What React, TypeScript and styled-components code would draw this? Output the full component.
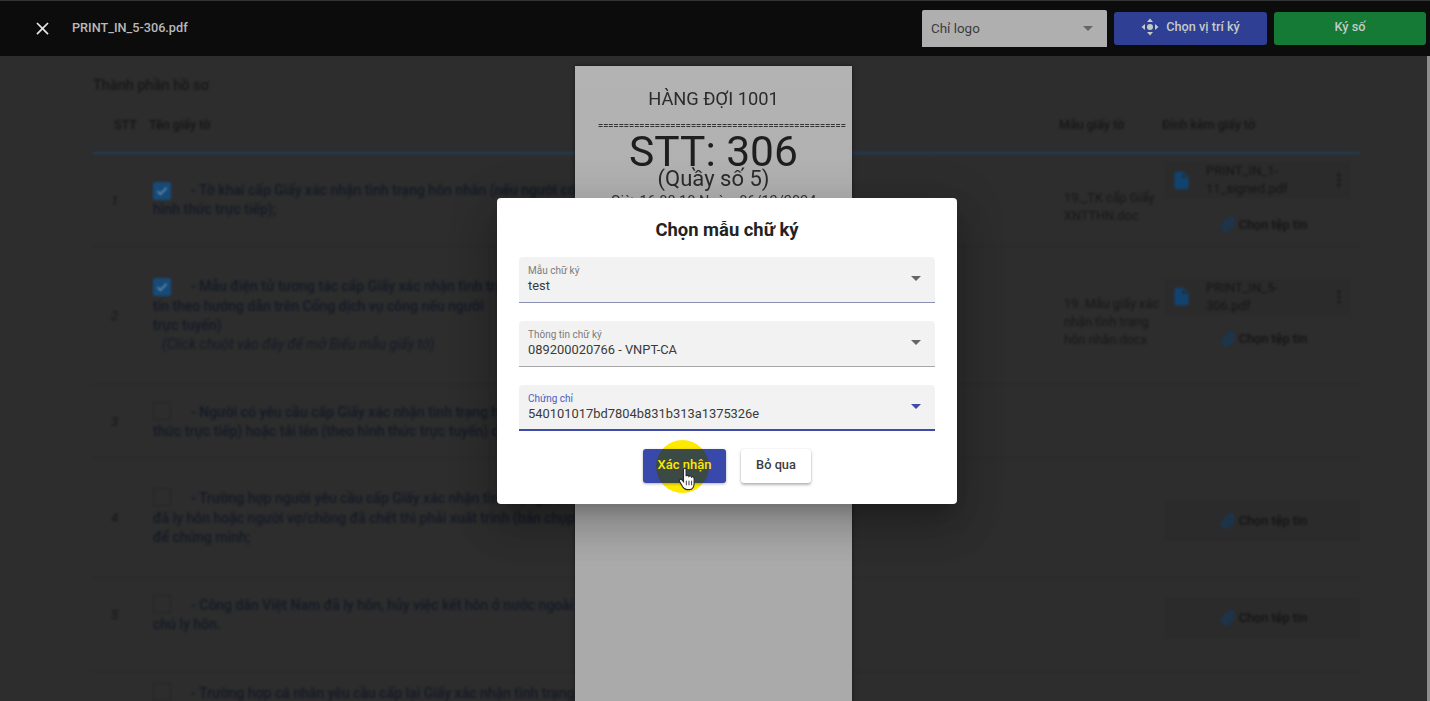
import { FC, ReactNode } from 'react';
import styled, { createGlobalStyle } from 'styled-components';
import { Paperclip } from 'lucide-react';
import { MdClose, MdInsertDriveFile, MdMoreVert } from 'react-icons/md';

const GlobalStyle = createGlobalStyle`
   html, body {
      margin: 0;
      padding: 0;
      height: 100%;
      overflow: hidden;
      font-family: Roboto, "Liberation Sans", sans-serif;
   }
   * { box-sizing: border-box; }
`;

const Screen = styled.div`
   position: relative;
   width: 1430px;
   height: 701px;
   overflow: hidden;
   background: #2d2d2d;
`;

/* page dimmed behind the pdf viewer */
const DocPage = styled.div`
   position: absolute;
   inset: 56px 0 0 0;
   padding: 20px 70px 0 93px;
   filter: blur(0.8px);
   color: #16181d;
   font-size: 14px;
   line-height: 19.3px;
`;

const DocTitle = styled.div`
   font-size: 14.5px;
   font-weight: 500;
   color: #181818;
`;

const grid = `
   display: grid;
   grid-template-columns: 57px 909px 103px 198px;
`;

const HeadRow = styled.div`
   ${grid}
   height: 59px;
   padding-top: 20px;
   border-bottom: 2px solid #1f3d5c;
   font-size: 12.5px;
   font-weight: 500;
   color: #161616;
`;

const HeadStt = styled.div`
   padding-left: 21px;
`;

const HeadName = styled.div`
   margin-left: -1px;
`;

const Row = styled.div<{ $h: number; $pb?: number }>`
   ${grid}
   height: ${(p) => p.$h}px;
   padding-bottom: ${(p) => p.$pb ?? 0}px;
   align-items: center;
   border-bottom: 1px solid #2a2a2a;
`;

const RowNo = styled.div`
   padding-left: 18px;
   font-size: 13px;
   font-style: italic;
   color: #181818;
`;

const NameCell = styled.div`
   padding-left: 3px;
   padding-right: 180px;
   font-weight: 500;
   color: #141a26;
`;

const Hint = styled.div`
   padding-left: 9px;
   font-style: italic;
   font-weight: 400;
`;

const Check = styled.span<{ $on?: boolean }>`
   display: inline-flex;
   align-items: center;
   justify-content: center;
   vertical-align: -3px;
   width: 18px;
   height: 18px;
   margin-right: 20px;
   border-radius: 2px;
   background: ${(p) => (p.$on ? '#174a78' : 'transparent')};
   border: ${(p) => (p.$on ? 'none' : '1.5px solid #262626')};
`;

const FormCell = styled.div`
   margin-top: 13px;
   padding-left: 5px;
   font-size: 12.7px;
   line-height: 18px;
   color: #181818;
   overflow: hidden;
   white-space: nowrap;
`;

const AttachCell = styled.div<{ $gap: number }>`
   display: flex;
   flex-direction: column;
   gap: ${(p) => p.$gap}px;
   margin-top: 6px;
   padding-left: 3px;
`;

const FileCard = styled.div`
   display: flex;
   align-items: center;
   width: 185px;
   height: 36px;
   padding: 0 1px 0 6px;
   background: #2b2b2b;
`;

const FileName = styled.div`
   flex: 1;
   margin-left: 14px;
   font-size: 13px;
   line-height: 18px;
   color: #161616;
`;

const PickBtn = styled.div<{ $filled?: boolean }>`
   display: flex;
   align-items: center;
   justify-content: center;
   gap: 3px;
   height: 40px;
   padding-left: 2px;
   font-size: 12.7px;
   font-weight: 500;
   color: #141414;
   background: ${(p) => (p.$filled ? '#2b2b2b' : 'transparent')};
`;

const Viewer = styled.div`
   position: absolute;
   inset: 0;
   display: flex;
   flex-direction: column;
`;

const TopBar = styled.div`
   display: flex;
   align-items: center;
   height: 56px;
   flex: none;
   padding: 0 4px 0 32px;
   background: #0c0c0c;
   border-top: 1px solid #333;
`;

const CloseBtn = styled.div`
   display: flex;
   color: #e4e4e4;
   margin-bottom: 1px;
`;

const PdfName = styled.div`
   flex: 1;
   margin-left: 19px;
   margin-bottom: 3px;
   font-size: 12.7px;
   font-weight: 500;
   color: #b9b9b9;
`;

const ModeSelect = styled.div`
   display: flex;
   align-items: center;
   justify-content: space-between;
   width: 185px;
   height: 37px;
   margin-right: 7px;
   padding: 0 14px 0 9px;
   background: #afafaf;
   border-radius: 2px 2px 0 0;
   font-size: 13.4px;
   color: #3c3c3c;
`;

const BarBtn = styled.div<{ $color: string; $w: number }>`
   display: flex;
   align-items: center;
   justify-content: center;
   gap: 7px;
   width: ${(p) => p.$w}px;
   height: 33px;
   margin-right: 7px;
   margin-bottom: 1px;
   padding-bottom: 3px;
   border-radius: 3px;
   background: ${(p) => p.$color};
   font-size: 12.7px;
   font-weight: 500;
   color: #c4cbc6;

   &:last-child {
      margin-right: 0;
   }
`;

const Caret = styled.span<{ $color?: string }>`
   width: 0;
   height: 0;
   border-left: 5px solid transparent;
   border-right: 5px solid transparent;
   border-top: 5px solid ${(p) => p.$color ?? '#666'};
`;

const PdfArea = styled.div`
   flex: 1;
   display: flex;
   justify-content: center;
   padding-top: 10px;
   border-right: 3px solid #8d8d8d;
   min-height: 0;
`;

const Paper = styled.div`
   width: 277px;
   height: 800px;
   padding-top: 22px;
   background: linear-gradient(#b3b3b3, #aaaaaa 60%);
   box-shadow: 0 0 4px rgba(0, 0, 0, 0.5);
   color: #1e1e1e;
   text-align: center;
   overflow: hidden;
   filter: blur(0.3px);
`;

const QueueName = styled.div`
   font-size: 18.3px;
   line-height: 22px;
   color: #2b2b2b;
`;

const Divider = styled.div`
   margin: 12px 0 0 23px;
   width: 248px;
   overflow: hidden;
   white-space: nowrap;
   font-size: 9px;
   line-height: 8px;
   font-weight: 700;
   text-align: left;
   color: #333;
`;

const Ticket = styled.div`
   font-size: 42.5px;
   line-height: 44px;
`;

const Counter = styled.div`
   font-size: 22px;
   line-height: 24px;
   margin-top: -7px;
   color: #2b2b2b;
`;

const Stamp = styled.div`
   margin-top: 2px;
   font-size: 14.5px;
   line-height: 18px;
   color: #333;
`;

const ModalLayer = styled.div`
   position: absolute;
   inset: 0;
   display: flex;
   align-items: center;
   justify-content: center;
   padding-left: 24px;
`;

const Modal = styled.div`
   display: flex;
   flex-direction: column;
   width: 460px;
   height: 306px;
   padding: 20px 22px 0;
   background: #fff;
   border-radius: 4px;
   box-shadow: 0 11px 15px -7px rgba(0, 0, 0, 0.2), 0 24px 38px 3px rgba(0, 0, 0, 0.14), 0 9px 46px 8px rgba(0, 0, 0, 0.12);
`;

const ModalTitle = styled.div`
   height: 39px;
   font-size: 18.4px;
   line-height: 24px;
   font-weight: 700;
   color: #222;
   text-align: center;
`;

const Field = styled.div<{ $active?: boolean; $line: string }>`
   position: relative;
   height: 46px;
   margin-bottom: 18px;
   padding: 8px 9px 0;
   background: #f2f2f2;
   border-radius: 4px 4px 0 0;
   border-bottom: ${(p) => (p.$active ? 2 : 1)}px solid ${(p) => p.$line};
`;

const FieldLabel = styled.div<{ $active?: boolean }>`
   font-size: 10px;
   line-height: 12px;
   color: ${(p) => (p.$active ? '#4f5cbc' : '#7c7c7c')};
`;

const FieldValue = styled.div`
   margin-top: 1.5px;
   font-size: 12.9px;
   line-height: 16px;
   color: #3a3a3a;
`;

const FieldCaret = styled.div`
   position: absolute;
   top: 19px;
   right: 14px;
   display: flex;
`;

const Actions = styled.div`
   position: relative;
   display: flex;
   justify-content: center;
   gap: 15px;
`;

/* screen recorder highlight round the mouse, the button repeats it darker */
const CursorHalo = styled.div`
   position: absolute;
   left: 137px;
   top: -9px;
   width: 53px;
   height: 53px;
   border-radius: 50%;
   background: #fee900;
`;

const ConfirmBtn = styled.div`
   position: relative;
   display: flex;
   align-items: center;
   justify-content: center;
   width: 83px;
   height: 34px;
   padding-bottom: 2px;
   border-radius: 3px;
   background: #3949ab;
   box-shadow: 0 1px 3px rgba(0, 0, 0, 0.3);
   font-size: 13px;
   font-weight: 500;
   color: #fee900;
   overflow: hidden;

   &::before {
      content: '';
      position: absolute;
      left: 13px;
      top: -9px;
      width: 53px;
      height: 53px;
      border-radius: 50%;
      background: #3c4a45;
   }
`;

const ConfirmText = styled.span`
   position: relative;
`;

const SkipBtn = styled.div`
   position: relative;
   display: flex;
   align-items: center;
   justify-content: center;
   width: 70px;
   height: 34px;
   padding-bottom: 2px;
   border-radius: 3px;
   background: #fff;
   box-shadow: 0 2px 3px rgba(0, 0, 0, 0.28), 0 0 2px rgba(0, 0, 0, 0.12);
   font-size: 12.8px;
   font-weight: 500;
   color: #3d3d3d;
`;

const CursorHand = styled.svg`
   position: absolute;
   left: 159px;
   top: 18px;
   width: 19px;
   height: 24px;
`;

const TickIcon = () => (
   <svg width="14" height="14" viewBox="0 0 14 14">
      <path d="M2.5 7.2 L5.6 10.2 L11.5 3.8" fill="none" stroke="#6d93b3" strokeWidth="1.6" />
   </svg>
);

const MoveIcon = () => (
   <svg width="18" height="18" viewBox="0 0 18 18" fill="#c4cbc6">
      <path d="M9 0.5 L12 4 H6 Z" />
      <path d="M9 17.5 L12 14 H6 Z" />
      <path d="M0.5 9 L4 6 V12 Z" />
      <path d="M17.5 9 L14 6 V12 Z" />
      <circle cx="9" cy="9" r="3" />
   </svg>
);

interface AttachProps {
   file?: ReactNode;
   filled?: boolean;
   gap?: number;
}

const Attach: FC<AttachProps> = ({ file, filled, gap = 4 }) => (
   <AttachCell $gap={gap}>
      {file && (
         <FileCard>
            <MdInsertDriveFile size={21} color="#114370" />
            <FileName>{file}</FileName>
            <MdMoreVert size={20} color="#1c1c1c" />
         </FileCard>
      )}
      <PickBtn $filled={filled}>
         <Paperclip size={16} color="#153a5c" strokeWidth={2.4} />
         Chọn tệp tin
      </PickBtn>
   </AttachCell>
);

const App: FC = (): JSX.Element => {
   return (
      <Screen>
         <GlobalStyle />
         <DocPage>
            <DocTitle>Thành phần hồ sơ</DocTitle>
            <HeadRow>
               <HeadStt>STT</HeadStt>
               <HeadName>Tên giấy tờ</HeadName>
               <div>Mẫu giấy tờ</div>
               <div>Đính kèm giấy tờ</div>
            </HeadRow>
            <Row $h={93}>
               <RowNo>1</RowNo>
               <NameCell>
                  <Check $on>
                     <TickIcon />
                  </Check>
                  - Tờ khai cấp Giấy xác nhận tình trạng hôn nhân (nếu người có yêu cầu nộp hồ sơ theo
                  <br />
                  hình thức trực tiếp);
               </NameCell>
               <FormCell>
                  19._TK cấp Giấy
                  <br />
                  XNTTHN.doc
               </FormCell>
               <Attach
                  gap={6}
                  file={
                     <>
                        PRINT_IN_1-
                        <br />
                        11_signed.pdf
                     </>
                  }
               />
            </Row>
            <Row $h={138}>
               <RowNo>2</RowNo>
               <NameCell>
                  <Check $on>
                     <TickIcon />
                  </Check>
                  - Mẫu điện tử tương tác cấp Giấy xác nhận tình trạng hôn nhân
                  <br />
                  tin theo hướng dẫn trên Cổng dịch vụ công nếu người
                  <br />
                  trực tuyến)
                  <Hint>(Click chuột vào đây để mở Biểu mẫu giấy tờ)</Hint>
               </NameCell>
               <FormCell>
                  19. Mẫu giấy xác
                  <br />
                  nhận tình trạng
                  <br />
                  hôn nhân.docx
               </FormCell>
               <Attach
                  file={
                     <>
                        PRINT_IN_5-
                        <br />
                        306.pdf
                     </>
                  }
               />
            </Row>
            <Row $h={73}>
               <RowNo>3</RowNo>
               <NameCell>
                  <Check />- Người có yêu cầu cấp Giấy xác nhận tình trạng hôn nhân
                  <br />
                  thức trực tiếp) hoặc tải lên (theo hình thức trực tuyến) của
               </NameCell>
            </Row>
            <Row $h={120}>
               <RowNo>4</RowNo>
               <NameCell>
                  <Check />- Trường hợp người yêu cầu cấp Giấy xác nhận tình trạng
                  <br />
                  đã ly hôn hoặc người vợ/chồng đã chết thì phải xuất trình (bản chụp)
                  <br />
                  để chứng minh;
               </NameCell>
               <div />
               <Attach filled />
            </Row>
            <Row $h={94} $pb={20}>
               <RowNo>5</RowNo>
               <NameCell>
                  <Check />- Công dân Việt Nam đã ly hôn, hủy việc kết hôn ở nước ngoài
                  <br />
                  chú ly hôn.
               </NameCell>
               <div />
               <Attach filled />
            </Row>
            <Row $h={61}>
               <RowNo />
               <NameCell>
                  <Check />- Trường hợp cá nhân yêu cầu cấp lại Giấy xác nhận tình trạng
                  <br />
                  hôn nhân
               </NameCell>
            </Row>
         </DocPage>

         <Viewer>
            <TopBar>
               <CloseBtn>
                  <MdClose size={21} />
               </CloseBtn>
               <PdfName>PRINT_IN_5-306.pdf</PdfName>
               <ModeSelect>
                  Chỉ logo
                  <Caret />
               </ModeSelect>
               <BarBtn $color="#2f3f94" $w={153}>
                  <MoveIcon />
                  Chọn vị trí ký
               </BarBtn>
               <BarBtn $color="#157a35" $w={152}>
                  Ký số
               </BarBtn>
            </TopBar>
            <PdfArea>
               <Paper>
                  <QueueName>HÀNG ĐỢI 1001</QueueName>
                  <Divider>{'='.repeat(60)}</Divider>
                  <Ticket>STT: 306</Ticket>
                  <Counter>(Quầy số 5)</Counter>
                  <Stamp>Giờ: 16:08:10 Ngày: 06/12/2024</Stamp>
               </Paper>
            </PdfArea>
         </Viewer>

         <ModalLayer>
            <Modal>
               <ModalTitle>Chọn mẫu chữ ký</ModalTitle>
               <Field $line="#8a8fb4">
                  <FieldLabel>Mẫu chữ ký</FieldLabel>
                  <FieldValue>test</FieldValue>
                  <FieldCaret>
                     <Caret />
                  </FieldCaret>
               </Field>
               <Field $line="#a8a8a8">
                  <FieldLabel>Thông tin chữ ký</FieldLabel>
                  <FieldValue>089200020766 - VNPT-CA</FieldValue>
                  <FieldCaret>
                     <Caret />
                  </FieldCaret>
               </Field>
               <Field $active $line="#3f4ba8">
                  <FieldLabel $active>Chứng chỉ</FieldLabel>
                  <FieldValue>540101017bd7804b831b313a1375326e</FieldValue>
                  <FieldCaret>
                     <Caret $color="#3f4ba8" />
                  </FieldCaret>
               </Field>
               <Actions>
                  <CursorHalo />
                  <ConfirmBtn>
                     <ConfirmText>Xác nhận</ConfirmText>
                  </ConfirmBtn>
                  <SkipBtn>Bỏ qua</SkipBtn>
                  <CursorHand viewBox="0 0 16 21">
                     <path
                        d="M4.5 2 C4.5 0.6 6.8 0.6 6.8 2 V8 C7.2 7 9 7 9.3 8.2 C9.8 7.4 11.4 7.6 11.6 8.8 C12.2 8.2 13.8 8.6 13.8 9.8 V14 C13.8 17 12.4 19.8 9.6 19.8 H7.6 C5.6 19.8 4.6 18.6 3.6 17 L1 12.6 C0.2 11.2 2.2 10 3.2 11.2 L4.5 12.8 Z"
                        fill="#fff"
                        stroke="#2a2a2a"
                        strokeWidth="1"
                     />
                     <path d="M7 12 V16 M9.3 12 V16 M11.6 12 V16" stroke="#2a2a2a" strokeWidth="0.8" />
                  </CursorHand>
               </Actions>
            </Modal>
         </ModalLayer>
      </Screen>
   );
};

export default App;
